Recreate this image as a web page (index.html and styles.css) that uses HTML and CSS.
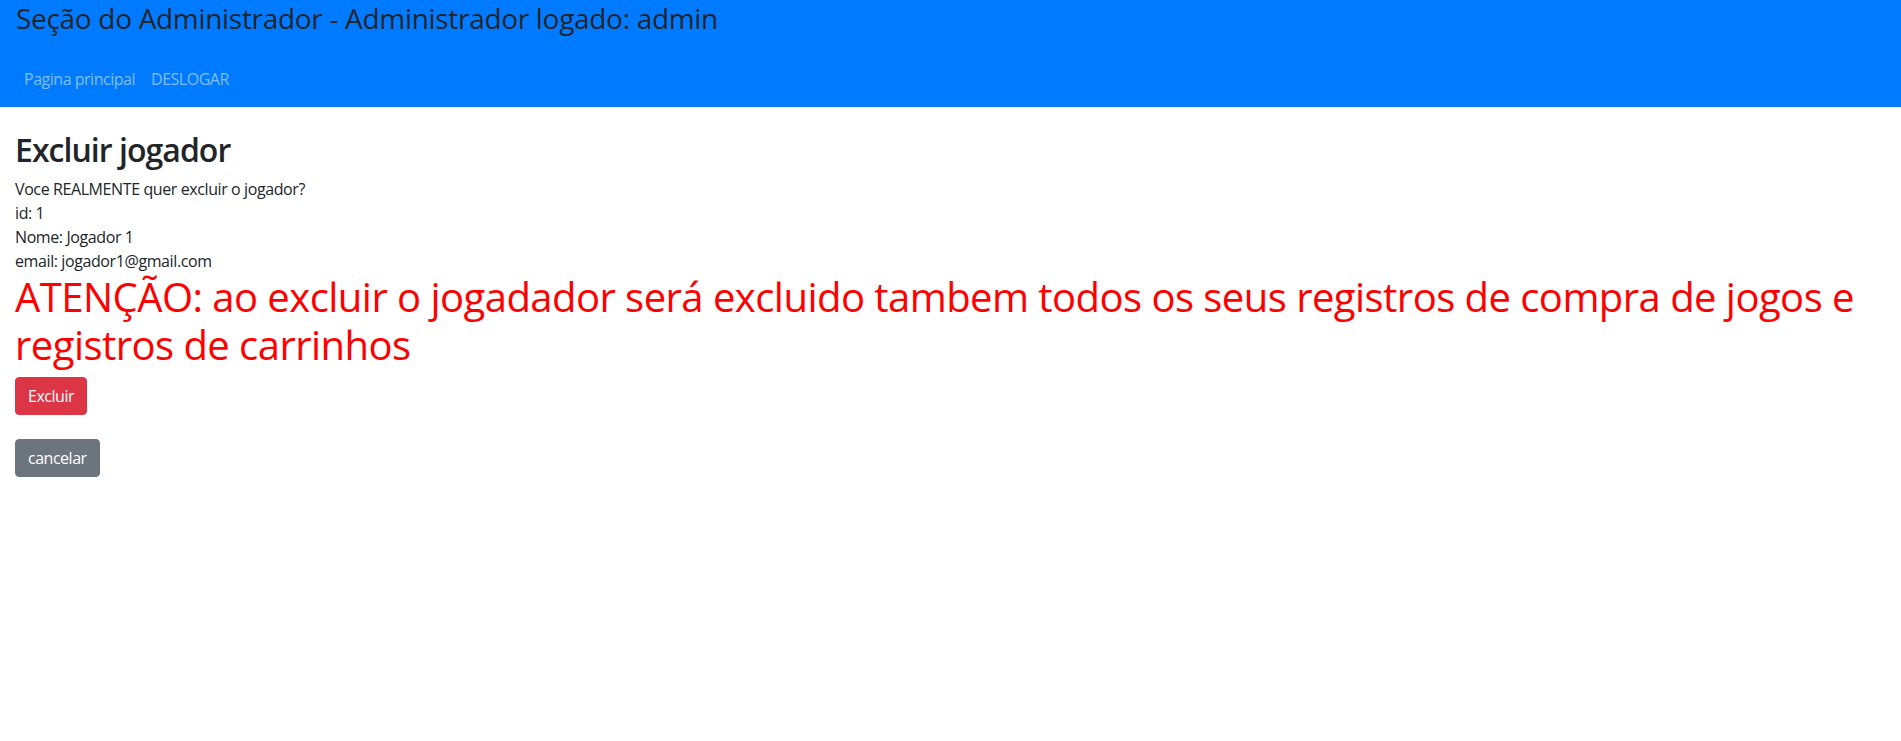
FILE: index.html
```html
<!DOCTYPE html>
<html lang="pt-BR">
<head>
<meta charset="utf-8">
<title>Excluir jogador</title>
<link rel="stylesheet" href="styles.css">
</head>
<body>
<header class="topbar">
  <h3 class="topbar-title">Seção do Administrador - Administrador logado: admin</h3>
  <nav class="topnav">
    <a class="topnav-link" href="#">Pagina principal</a>
    <a class="topnav-link" href="#">DESLOGAR</a>
  </nav>
</header>
<main class="content">
  <h2 class="page-title">Excluir jogador</h2>
  <div class="info">
    <div class="info-line">Voce REALMENTE quer excluir o jogador?</div>
    <div class="info-line">id: 1</div>
    <div class="info-line">Nome: Jogador 1</div>
    <div class="info-line">email: jogador1@gmail.com</div>
  </div>
  <h1 class="warning">ATENÇÃO: ao excluir o jogadador será excluido tambem todos os seus registros de compra de jogos e registros de carrinhos</h1>
  <div class="actions">
    <button class="btn btn-danger" type="button">Excluir</button>
    <button class="btn btn-secondary" type="button">cancelar</button>
  </div>
</main>
</body>
</html>
```
FILE: styles.css
```css
*, *::before, *::after { box-sizing: border-box; }

body {
  margin: 0;
  font-family: "Open Sans", "Noto Sans", sans-serif;
  font-size: 16px;
  line-height: 1.5;
  letter-spacing: -0.03em;
  color: #212529;
  background: #fff;
}

.topbar {
  background: #007bff;
  padding: 2px 16px 8px;
}

.topbar-title {
  margin: 0;
  font-size: 28px;
  line-height: 33.6px;
  font-weight: 400;
  letter-spacing: -0.011em;
  color: #212529;
}

.topnav {
  display: flex;
  margin-top: 23px;
}

.topnav-link {
  display: block;
  padding: 8px;
  color: rgba(255, 255, 255, 0.5);
  text-decoration: none;
  line-height: 24px;
}

.content {
  padding: 24px 15px 0;
}

.page-title {
  margin: 0 0 8px;
  font-size: 32px;
  line-height: 38.4px;
  font-weight: 600;
  letter-spacing: -0.03em;
  color: #212529;
}

.info-line {
  line-height: 24px;
  letter-spacing: -0.025em;
}

.warning {
  margin: 0 0 8px;
  font-size: 40px;
  line-height: 48px;
  font-weight: 400;
  letter-spacing: -0.0135em;
  color: #ff0000;
}

.actions {
  display: flex;
  flex-direction: column;
  align-items: flex-start;
  gap: 24px;
}

.btn {
  font-family: inherit;
  letter-spacing: -0.03em;
  font-size: 16px;
  line-height: 24px;
  padding: 6px 12px;
  border: 1px solid transparent;
  border-radius: 4px;
  color: #fff;
  cursor: pointer;
}

.btn-danger {
  background: #dc3545;
  border-color: #dc3545;
}

.btn-secondary {
  background: #6c757d;
  border-color: #6c757d;
}
```
